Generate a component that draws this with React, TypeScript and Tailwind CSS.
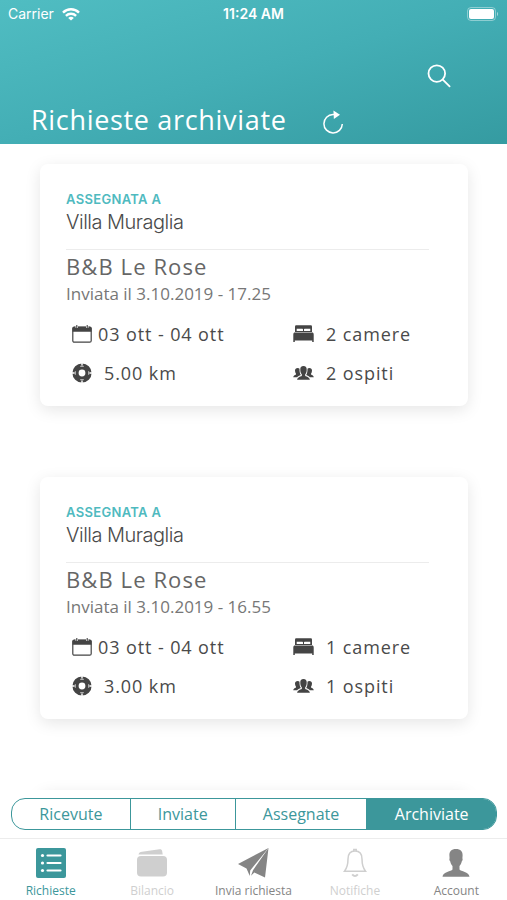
import { ReactNode } from "react";
import { clsx } from "clsx";

interface Request {
  assignee: string;
  title: string;
  sent: string;
  dates: string;
  distance: string;
  rooms: string;
  guests: string;
}

const requests: Request[] = [
  {
    assignee: "Villa Muraglia",
    title: "B&B Le Rose",
    sent: "Inviata il 3.10.2019 - 17.25",
    dates: "03 ott - 04 ott",
    distance: "5.00 km",
    rooms: "2 camere",
    guests: "2 ospiti",
  },
  {
    assignee: "Villa Muraglia",
    title: "B&B Le Rose",
    sent: "Inviata il 3.10.2019 - 16.55",
    dates: "03 ott - 04 ott",
    distance: "3.00 km",
    rooms: "1 camere",
    guests: "1 ospiti",
  },
];

function WifiIcon() {
  return (
    <svg width="18" height="13" viewBox="0 0 18 13" fill="none" stroke="white" strokeWidth="2.4">
      <path d="M1 4.6a11.4 11.4 0 0 1 16 0" />
      <path d="M3.9 7.8a7.3 7.3 0 0 1 10.2 0" />
      <path d="M9 12.6 6.2 9.900a3.900 3.900 0 0 1 5.600 0z" fill="white" stroke="none" />
    </svg>
  );
}

function BatteryIcon() {
  return (
    <svg width="32" height="14" viewBox="0 0 32 14">
      <rect x="0.5" y="0.5" width="28" height="13" rx="3.5" fill="none" stroke="white" strokeOpacity="0.4" />
      <rect x="2" y="2" width="25" height="10" rx="2" fill="white" />
      <path d="M30 5c1.4.4 1.4 3.6 0 4z" fill="white" fillOpacity="0.5" />
    </svg>
  );
}

function SearchIcon() {
  return (
    <svg width="24" height="24" viewBox="0 0 24 24" fill="none" stroke="white" strokeWidth="1.8" strokeLinecap="round">
      <circle cx="9.8" cy="9.6" r="8.3" />
      <path d="m15.8 15.6 6.8 6.8" />
    </svg>
  );
}

function ReloadIcon() {
  return (
    <svg width="22" height="24" viewBox="0 0 22 24">
      <path d="M11 4.500h-1a9.200 9.200 0 1 0 9.300 9.500" fill="none" stroke="white" strokeWidth="1.5" />
      <path d="M10.400 0.600 17 4.700 10.900 9z" fill="white" />
    </svg>
  );
}

function CalendarIcon() {
  return (
    <svg width="20" height="18" viewBox="0 0 20 18">
      <rect x="0.8" y="2.2" width="18.4" height="15" rx="1.5" fill="none" stroke="#444" strokeWidth="1.2" />
      <path d="M0.5 6.800V3.200q0-1.500 1.500-1.500h16q1.500 0 1.500 1.500v3.600z" fill="#444" />
      <path d="M4.800 0.600v2.400M15.200 0.600v2.400" stroke="white" strokeWidth="2.400" />
      <path d="M4.800 0.500v2M15.200 0.500v2" stroke="#444" strokeWidth="1.200" strokeLinecap="round" />
    </svg>
  );
}

function DistanceIcon() {
  return (
    <svg width="20" height="20" viewBox="0 0 20 20">
      <circle cx="10" cy="10" r="6.500" fill="none" stroke="#444" strokeWidth="6.200" />
      <path d="M10 0v2.600M10 17.400V20M0 10h2.600M17.400 10H20" stroke="white" strokeWidth="1.400" />
      <path d="M8.200 3.300h3.600M8.200 16.700h3.600M3.300 8.200v3.600M16.700 8.200v3.600" stroke="white" strokeWidth="0.700" />
    </svg>
  );
}

function BedIcon() {
  return (
    <svg width="21" height="17" viewBox="0 0 21 17" fill="#444">
      <path d="M2 7V1.500Q2 .3 3.200.3h14.600Q19 .3 19 1.500V7z" />
      <path d="M3.700 6V3.800h5.700q.6 0 .6.600V6zM17.300 6V3.800h-5.700q-.6 0-.6.600V6z" fill="white" />
      <path d="M1.200 7.500h18.600q.9.800.9 1.900V17h-1.500v-1.600H1.800V17H.3V9.400q0-1.100.9-1.900z" />
    </svg>
  );
}

function GuestsIcon() {
  return (
    <svg width="21" height="14" viewBox="0 0 21 14" fill="#444">
      <path d="M10.500.1c2.300 0 3.300 1.400 3.200 3.600 0 2-.6 3.600-1.500 4.600v1.600c1.800.7 4.300 1.200 4.700 3.900H4.100c.4-2.700 2.900-3.200 4.700-3.900V8.300c-.9-1-1.500-2.600-1.500-4.600C7.200 1.500 8.200.1 10.500.1z" />
      <path d="M4.700 2c.8 0 1.400.2 1.800.7-.1 2.600.3 4.500 1.300 6.200-1.600.5-2.800 1.100-3.600 2.300H.2c.3-1.700 1.400-2.200 2.800-2.800V7.700c-.7-.8-1-1.900-1-3.100C2 3 3 2 4.700 2z" />
      <path d="M16.300 2c-.8 0-1.400.2-1.800.7.1 2.600-.3 4.500-1.300 6.200 1.600.5 2.800 1.100 3.600 2.300h4c-.3-1.700-1.400-2.200-2.800-2.800V7.700c.7-.8 1-1.900 1-3.100C19 3 18 2 16.300 2z" />
    </svg>
  );
}

function ListIcon() {
  return (
    <svg width="32" height="32" viewBox="0 0 32 32">
      <rect x="1" y="1" width="30" height="30" rx="2" fill="#3c979b" />
      <g fill="white">
        <circle cx="7.5" cy="8.5" r="1.6" />
        <circle cx="7.5" cy="16" r="1.6" />
        <circle cx="7.5" cy="23.5" r="1.6" />
      </g>
      <path d="M12.5 8.5h13M12.5 16h13M12.5 23.5h13" stroke="white" strokeWidth="2.2" strokeLinecap="round" />
    </svg>
  );
}

function WalletIcon() {
  return (
    <svg width="32" height="32" viewBox="0 0 32 32" fill="#cfcfcf">
      <rect x="1" y="9" width="30" height="20.5" rx="4" />
      <path d="M2.500 7.500C3 5.600 4 5 6 4.700L23.500 2.200c1.600-.2 2.200.3 2.600 1.600l.6 3.700z" />
    </svg>
  );
}

function PlaneIcon() {
  return (
    <svg width="32" height="32" viewBox="0 0 32 32" fill="#858585">
      <path d="M31.500 1 1 17l8.500 4.500 3.300 7.500.4-5.500z" />
      <path d="M31.500 1 16 23.200l-2 5.600 3.300-3.300L28 30.500z" />
    </svg>
  );
}

function BellIcon() {
  return (
    <svg width="32" height="32" viewBox="0 0 32 32" fill="none" stroke="#cfcfcf" strokeWidth="1.500">
      <path d="M16 4c-5 0-7 3.800-7 8 0 6-.8 8.700-3.500 12.200h21C23.800 20.700 23 18 23 12c0-4.200-2-8-7-8z" />
      <path d="M14.800 4V2.500h2.400V4" />
      <path d="M13.200 27.300q2.800 3.400 5.600 0" strokeWidth="2" />
    </svg>
  );
}

function AccountIcon() {
  return (
    <svg width="32" height="32" viewBox="0 0 32 32" fill="#858585">
      <path d="M16 2c4.600 0 6.800 2.400 6.600 6.500l-.2 2.700c.5.900.2 2.600-.7 3.300-.4 2-1 3.300-2.200 4.600v3.400c1.200 2 9.500 2.200 10 7.200H2.500c.5-5 8.800-5.200 10-7.200v-3.400c-1.200-1.300-1.800-2.600-2.200-4.600-.9-.7-1.200-2.400-.7-3.300l-.2-2.700C9.200 4.400 11.400 2 16 2z" />
    </svg>
  );
}

function Detail({ icon, gap, children }: { icon: ReactNode; gap: string; children: ReactNode }) {
  return (
    <div className={clsx("flex h-[39px] items-center", gap)}>
      {icon}
      <span>{children}</span>
    </div>
  );
}

function RequestCard({ request }: { request: Request }) {
  return (
    <article className="rounded-lg bg-white pt-[26px] pr-[39px] pb-[14px] pl-[26px] shadow-[0_4px_16px_rgba(0,0,0,0.1)]">
      <p className="font-['Inter'] text-[13px] leading-[18px] font-semibold tracking-wide text-[#4fbabf]">ASSEGNATA A</p>
      <p className="font-['Inter'] text-xl leading-7 font-light tracking-tight text-[#4a4a4a]">{request.assignee}</p>
      <hr className="mt-[13px] border-[#ececec]" />
      <h2 className="text-[22px] leading-8 tracking-wider text-[#666]">{request.title}</h2>
      <p className="text-[17px] leading-6 text-[#777]">{request.sent}</p>
      <div className="mt-2 grid grid-cols-[221fr_136fr] pl-[6px] text-lg tracking-wider whitespace-nowrap text-[#4a4a4a]">
        <Detail icon={<CalendarIcon />} gap="gap-[6px]">{request.dates}</Detail>
        <Detail icon={<BedIcon />} gap="gap-3">{request.rooms}</Detail>
        <Detail icon={<DistanceIcon />} gap="gap-3">{request.distance}</Detail>
        <Detail icon={<GuestsIcon />} gap="gap-3">{request.guests}</Detail>
      </div>
    </article>
  );
}

const filters = [
  { label: "Ricevute", width: "flex-[119]" },
  { label: "Inviate", width: "flex-[105]" },
  { label: "Assegnate", width: "flex-[132]" },
  { label: "Archiviate", width: "flex-[130]" },
];

const tabs = [
  { label: "Richieste", icon: <ListIcon />, color: "text-[#3c979b]" },
  { label: "Bilancio", icon: <WalletIcon />, color: "text-[#cfcfcf]" },
  { label: "Invia richiesta", icon: <PlaneIcon />, color: "text-[#858585]" },
  { label: "Notifiche", icon: <BellIcon />, color: "text-[#cfcfcf]" },
  { label: "Account", icon: <AccountIcon />, color: "text-[#858585]" },
];

export default function App() {
  return (
    <div className="flex h-screen flex-col bg-white font-['Open_Sans','Noto_Sans',sans-serif]">
      <header className="bg-linear-to-br from-[#50bdc2] via-[#43aeb5] to-[#359ba1] pb-1 text-white">
        <div className="grid h-7 grid-cols-3 items-center px-2 font-['Inter'] text-sm">
          <div className="flex items-center gap-2">
            <span>Carrier</span>
            <WifiIcon />
          </div>
          <span className="text-center font-semibold">11:24 AM</span>
          <div className="flex justify-end">
            <BatteryIcon />
          </div>
        </div>
        <div className="flex h-[72px] items-end justify-end px-14 pb-3">
          <button type="button" aria-label="Cerca">
            <SearchIcon />
          </button>
        </div>
        <div className="flex h-10 items-center gap-9 pl-[31px]">
          <h1 className="text-[27px] leading-10 tracking-wide">Richieste archiviate</h1>
          <button type="button" aria-label="Aggiorna" className="pt-1">
            <ReloadIcon />
          </button>
        </div>
      </header>

      <main className="flex min-h-0 flex-1 flex-col gap-[71px] overflow-hidden pt-5 pr-[39px] pl-10">
        {requests.map((request) => (
          <RequestCard key={request.sent} request={request} />
        ))}
        <div className="h-10 shrink-0 rounded-lg shadow-[0_4px_16px_rgba(0,0,0,0.1)]" />
      </main>

      <div className="bg-white py-2 pr-[10px] pl-[11px]">
        <div className="flex h-8 overflow-hidden rounded-[14px] border border-[#3c979b] text-base">
          {filters.map(({ label, width }, i) => (
            <button
              key={label}
              type="button"
              className={clsx(
                width,
                i > 0 && "border-l border-[#3c979b]",
                label === "Archiviate" ? "bg-[#3c979b] text-white" : "text-[#3c979b]"
              )}
            >
              {label}
            </button>
          ))}
        </div>
      </div>

      <nav className="grid h-[62px] grid-cols-5 border-t border-[#ececec] bg-white pt-2">
        {tabs.map(({ label, icon, color }) => (
          <button
            key={label}
            type="button"
            className={clsx("flex flex-col items-center justify-start gap-1 text-xs whitespace-nowrap", color)}
          >
            {icon}
            <span>{label}</span>
          </button>
        ))}
      </nav>
    </div>
  );
}
